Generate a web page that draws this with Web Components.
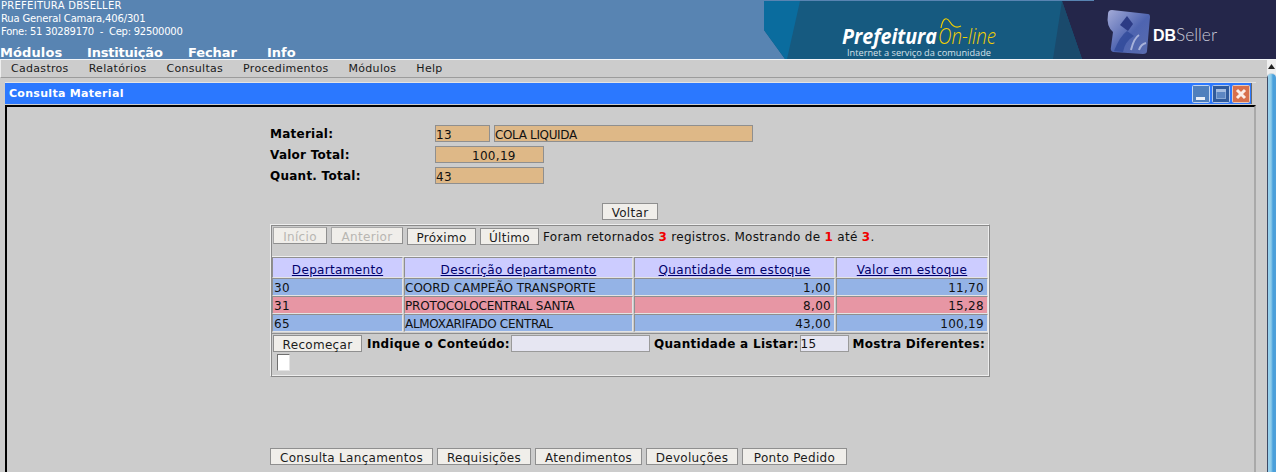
<!DOCTYPE html>
<html lang="pt">
<head>
<meta charset="utf-8">
<title>Consulta Material</title>
<style>
    html, body {
        margin: 0;
        height: 100%;
        overflow: hidden;
        background: #cccccc;
        font-family: "DejaVu Sans", sans-serif;
    }
    #page {
        display: flex;
        flex-direction: column;
        height: 472px;
        overflow: hidden;
    }
    #main {
        display: flex;
        flex: 1;
        min-height: 0;
    }
    #left {
        flex: 1;
        min-width: 0;
        display: flex;
        flex-direction: column;
    }
</style>
</head>
<body>
<div id="page">
    <db-header></db-header>
    <div id="main">
        <div id="left">
            <db-menubar></db-menubar>
            <db-window title="Consulta Material">
                <db-form></db-form>
                <db-grid></db-grid>
                <db-actions></db-actions>
            </db-window>
        </div>
        <db-scrollbar></db-scrollbar>
    </div>
</div>

<script>
const buttonStyles = `
    .btn {
        box-sizing: border-box;
        display: inline-flex;
        align-items: center;
        justify-content: center;
        height: 17px;
        padding: 2px 9px 0;
        border: 1px solid #8f8f8f;
        background: #f0eeea;
        color: #1c1c1c;
        font: 12px "DejaVu Sans", sans-serif;
        letter-spacing: .3px;
        white-space: nowrap;
    }
    .btn.off {
        color: #b8b6b2;
        border-color: #a8a8a8 #8f8f8f #8f8f8f #a8a8a8;
    }
`;

class DbHeader extends HTMLElement {
    constructor() {
        super();
        this.attachShadow({mode: "open"});
        this.shadowRoot.innerHTML = `
<style>
    :host {
        display: flex;
        justify-content: space-between;
        height: 59px;
        flex: none;
        background: #5884b2;
        border-bottom: 1px solid #f2f5f8;
        color: #fff;
    }
    .info {
        font-size: 10px;
        line-height: 13px;
        padding-left: 1px;
        margin-top: -1px;
        white-space: pre;
    }
    .info div:nth-child(1) { letter-spacing: .26px; }
    .info div:nth-child(2) { letter-spacing: -.16px; }
    .info div:nth-child(3) { letter-spacing: -.26px; }
    nav {
        display: flex;
        font-size: 13px;
        font-weight: bold;
        line-height: 15px;
        margin-top: 7px;
    }
    nav span { white-space: nowrap; }
    nav span:nth-child(1) { width: 87px; letter-spacing: .1px; }
    nav span:nth-child(2) { width: 101px; letter-spacing: -.2px; }
    nav span:nth-child(3) { width: 79px; letter-spacing: -.1px; }
    svg {
        display: block;
        flex: none;
    }
</style>
<div>
    <div class="info"><div>PREFEITURA DBSELLER</div><div>Rua General Camara,406/301</div><div>Fone: 51 30289170  -  Cep: 92500000</div></div>
    <nav><span>Módulos</span><span>Instituição</span><span>Fechar</span><span>Info</span></nav>
</div>
<svg width="512" height="59" viewBox="764 0 512 59">
    <defs>
        <linearGradient id="cube" x1="0" y1="0" x2="1" y2="1">
            <stop offset="0" stop-color="#a4abd8"/>
            <stop offset=".55" stop-color="#4e64b0"/>
            <stop offset="1" stop-color="#5a6cae"/>
        </linearGradient>
    </defs>
    <polygon points="764,1 1276,1 1276,59 785,59 764,30" fill="#165a80"/>
    <polygon points="764,1 800,1 787,59 785,59 764,30" fill="#0a6c9e"/>
    <polygon points="1062,1 1094,1 1094,0 1276,0 1276,59 1082,59" fill="#24264a"/>
    <polygon points="1062,1 1082,59 1053,59" fill="#1a4a6c"/>
    <text x="842" y="44" font-family="'Open Sans', sans-serif" font-size="21" font-weight="700" font-style="italic" fill="#fff" textLength="95" lengthAdjust="spacingAndGlyphs">Prefeitura</text>
    <text x="938" y="44" font-family="'Open Sans', sans-serif" font-size="22" font-weight="300" font-style="italic" fill="#f3d000" textLength="58" lengthAdjust="spacingAndGlyphs">On-line</text>
    <path d="M941 28 C943 17 947 17 950 22 C953 27 957 28 961 26" fill="none" stroke="#f3d000" stroke-width="1.2"/>
    <text x="847" y="56" font-family="'Open Sans', sans-serif" font-size="9.5" fill="#d5e0e8" textLength="144" lengthAdjust="spacingAndGlyphs">Internet a serviço da comunidade</text>
    <path d="M1108 14 Q1108 10 1112 10 L1148 14 Q1150 14 1150 17 L1147 51 Q1147 54 1143 54 L1113 52 Q1110 51 1111 47 L1113 32 Q1106 26 1108 14 Z" fill="url(#cube)"/>
    <polygon points="1120,25 1127,16 1133,24 1128,31" fill="#2c3b85"/>
    <path d="M1114 51 Q1120 36 1127 31 L1134 36 Q1125 41 1123 52 Z" fill="#2f4898" opacity=".8"/>
    <path d="M1131 50 Q1134 38 1139 35 M1139 50 Q1141 44 1146 43" fill="none" stroke="#c4cbe8" stroke-width="2" opacity=".75"/>
    <text x="1153" y="41" font-family="'Liberation Sans', sans-serif" font-size="16" font-weight="bold" fill="#fff">DB</text>
    <text x="1176" y="41" font-family="Lato, sans-serif" font-size="17" font-weight="300" fill="#c9cbd8" textLength="41" lengthAdjust="spacingAndGlyphs">Seller</text>
</svg>`;
    }
}

class DbMenubar extends HTMLElement {
    constructor() {
        super();
        this.attachShadow({mode: "open"});
        const items = ["Cadastros", "Relatórios", "Consultas", "Procedimentos", "Módulos", "Help"];
        this.shadowRoot.innerHTML = `
<style>
    :host {
        display: flex;
        flex: none;
        box-sizing: border-box;
        height: 18px;
        align-items: center;
        gap: 20px;
        padding-left: 10px;
        background: #cccccc;
        border-left: 1px solid #eeeeee;
        border-bottom: 1px solid #9c9c9c;
        color: #1a1a1a;
        font-size: 11px;
        letter-spacing: .3px;
    }
</style>
${items.map(i => `<span>${i}</span>`).join("")}`;
    }
}

class DbWindow extends HTMLElement {
    constructor() {
        super();
        this.attachShadow({mode: "open"});
        this.shadowRoot.innerHTML = `
<style>
    :host {
        display: flex;
        flex-direction: column;
        flex: 1;
        min-height: 0;
        width: 1251px;
        margin: 4px 0 0 5px;
        border-top: 1px solid #e4e4e4;
    }
    .bar {
        flex: none;
        box-sizing: border-box;
        display: flex;
        align-items: center;
        justify-content: space-between;
        width: 1247px;
        height: 21px;
        padding: 0 1px 0 4px;
        background: #2b78ff;
        border-right: 1px solid #6b6b6b;
        color: #fff;
        font-size: 11px;
        font-weight: bold;
        letter-spacing: .3px;
    }
    .tools { display: flex; gap: 2px; }
    .tools svg { display: block; }
    .body {
        flex: 1;
        min-height: 0;
        display: flex;
        flex-direction: column;
        border-top: 2px solid #000;
        border-left: 2px solid #000;
        border-right: 2px solid #a9a9a9;
        margin-top: 1px;
        padding: 18px 0 0 263px;
    }
</style>
<div class="bar">
    <span>${this.getAttribute("title")}</span>
    <div class="tools">
        <svg width="18" height="18"><rect x=".5" y=".5" width="17" height="17" rx="1" fill="#4f7fbd" stroke="#c4d6f0"/><rect x="4" y="12" width="9" height="3" fill="#e8eef8"/></svg>
        <svg width="18" height="18"><rect x=".5" y=".5" width="17" height="17" rx="1" fill="#2f5a9c" stroke="#b4c8e8"/><rect x="4.5" y="4.5" width="9" height="9" fill="#5c86c2" stroke="#86a6d4"/><rect x="4" y="4" width="10" height="3" fill="#a4bce0"/></svg>
        <svg width="18" height="18"><rect x=".5" y=".5" width="17" height="17" rx="1" fill="#d8704c" stroke="#e8c8b8"/><path d="M5 5 L13 13 M13 5 L5 13" stroke="#fbeee8" stroke-width="3"/></svg>
    </div>
</div>
<div class="body"><slot></slot></div>`;
    }
}

class DbForm extends HTMLElement {
    constructor() {
        super();
        this.attachShadow({mode: "open"});
        this.shadowRoot.innerHTML = `
<style>
    :host {
        display: grid;
        grid-template-columns: 165px 1fr;
        row-gap: 4px;
        width: 720px;
        color: #000;
        font-size: 12px;
    }
    b { height: 17px; line-height: 19px; letter-spacing: .25px; }
    .vals { display: flex; gap: 4px; }
    .f {
        box-sizing: border-box;
        height: 17px;
        border: 1px solid #8f8f8f;
        background: #deb887;
        line-height: 18px;
        color: #111;
        overflow: hidden;
        white-space: nowrap;
    }
    .voltar {
        grid-column: 1 / 3;
        display: flex;
        justify-content: center;
        margin: 15px 0 4px;
    }
    ${buttonStyles}
    .voltar .btn { width: 56px; padding: 2px 0 0; }
</style>
<b>Material:</b>
<div class="vals">
    <div class="f" style="width:55px;letter-spacing:.3px">13</div>
    <div class="f" style="width:259px;letter-spacing:-.35px">COLA LIQUIDA</div>
</div>
<b>Valor Total:</b>
<div class="vals"><div class="f" style="width:109px;padding-left:36px;letter-spacing:.3px">100,19</div></div>
<b>Quant. Total:</b>
<div class="vals"><div class="f" style="width:109px;letter-spacing:.3px">43</div></div>
<div class="voltar"><span class="btn">Voltar</span></div>`;
    }
}

class DbGrid extends HTMLElement {
    constructor() {
        super();
        this.attachShadow({mode: "open"});
        const rows = [
            ["30", "COORD CAMPEÃO TRANSPORTE", "1,00", "11,70", "blue", "0"],
            ["31", "PROTOCOLOCENTRAL SANTA", "8,00", "15,28", "red", "-.2px"],
            ["65", "ALMOXARIFADO CENTRAL", "43,00", "100,19", "blue", "-.3px"]
        ];
        const cells = rows.map(r => `
            <div class="c ${r[4]}" style="letter-spacing:.3px">${r[0]}</div>
            <div class="c ${r[4]}" style="padding-left:0;letter-spacing:${r[5]}">${r[1]}</div>
            <div class="c ${r[4]} num">${r[2]}</div>
            <div class="c ${r[4]} num">${r[3]}</div>`).join("");
        this.shadowRoot.innerHTML = `
<style>
    :host {
        display: block;
        box-sizing: border-box;
        width: 720px;
        height: 153px;
        border: 1px solid;
        border-color: #eeeeee #8a8a8a #8a8a8a #eeeeee;
        box-shadow: inset 1px 1px 0 #8a8a8a, inset -1px -1px 0 #eeeeee;
        padding: 1px;
        font-size: 12px;
        color: #111;
    }
    .nav {
        display: flex;
        align-items: flex-start;
        gap: 4px;
        height: 31px;
        padding: 2px 0 0 1px;
        border-bottom: 1px solid #eeeeee;
        box-sizing: border-box;
        line-height: 19px;
        letter-spacing: .3px;
    }
    .nav .off { margin-top: -1px; }
    .status { white-space: nowrap; }
    .status b { color: #f00000; }
    ${buttonStyles}
    .table {
        display: grid;
        grid-template-columns: 131px 229px 201px 152px;
        column-gap: 1px;
        grid-template-rows: 21px 18px 18px 18px;
    }
    .c {
        box-sizing: border-box;
        border: 1px solid;
        border-color: #8f8f8f #e4e4e4 #e4e4e4 #8f8f8f;
        padding-left: 1px;
        line-height: 18px;
        white-space: nowrap;
        overflow: hidden;
    }
    .h {
        background: #ccccff;
        color: #00006a;
        text-align: center;
        text-decoration: underline;
        line-height: 24px;
        padding: 0;
        letter-spacing: .33px;
    }
    .blue { background: #94b3e6; }
    .red { background: #e796a4; }
    .num { text-align: right; padding: 0 3px 0 0; letter-spacing: .3px; }
    .search {
        display: flex;
        align-items: center;
        flex-wrap: wrap;
        margin-top: 1px;
        padding: 1px 0 0 1px;
        border-top: 1px solid #8f8f8f;
    }
    .search b { font-size: 12px; color: #000; white-space: nowrap; letter-spacing: .3px; }
    .i {
        box-sizing: border-box;
        height: 17px;
        border: 1px solid #9a9a9a;
        background: #e6e6f2;
        line-height: 17px;
        letter-spacing: .3px;
    }
    .check {
        width: 13px;
        height: 17px;
        margin: 2px 0 0 4px;
        background: #fff;
        border: 1px solid;
        border-color: #707070 #e4e4e4 #e4e4e4 #707070;
        box-sizing: border-box;
        flex: none;
    }
    .break { flex-basis: 100%; height: 0; }
</style>
<div class="nav">
    <span class="btn off" style="width:54px">Início</span>
    <span class="btn off" style="width:72px">Anterior</span>
    <span class="btn" style="width:69px">Próximo</span>
    <span class="btn" style="width:59px">Último</span>
    <span class="status">Foram retornados <b>3</b> registros. Mostrando de <b>1</b> até <b>3</b>.</span>
</div>
<div class="table">
    <div class="c h">Departamento</div>
    <div class="c h">Descrição departamento</div>
    <div class="c h">Quantidade em estoque</div>
    <div class="c h">Valor em estoque</div>
    ${cells}
</div>
<div class="search">
    <span class="btn" style="width:89px">Recomeçar</span>
    <b style="margin-left:5px">Indique o Conteúdo:</b>
    <div class="i" style="width:139px;margin-left:1px"></div>
    <b style="margin-left:4px">Quantidade a Listar:</b>
    <div class="i" style="width:49px;margin-left:1px">15</div>
    <b style="margin-left:4px">Mostra Diferentes:</b>
    <div class="break"></div>
    <div class="check"></div>
</div>`;
    }
}

class DbActions extends HTMLElement {
    constructor() {
        super();
        this.attachShadow({mode: "open"});
        const buttons = [["Consulta Lançamentos", 163], ["Requisições", 94], ["Atendimentos", 107], ["Devoluções", 92], ["Ponto Pedido", 105]];
        this.shadowRoot.innerHTML = `
<style>
    :host {
        display: flex;
        gap: 4px;
        margin-top: 71px;
    }
    ${buttonStyles}
    .btn { padding-left: 0; padding-right: 0; }
</style>
${buttons.map(b => `<span class="btn" style="width:${b[1]}px">${b[0]}</span>`).join("")}`;
    }
}

class DbScrollbar extends HTMLElement {
    constructor() {
        super();
        this.attachShadow({mode: "open"});
        this.shadowRoot.innerHTML = `
<style>
    :host {
        display: flex;
        flex-direction: column;
        flex: none;
        width: 9px;
        background: #eeeeee;
    }
    .arrow {
        height: 13px;
        flex: none;
        display: flex;
        align-items: center;
        justify-content: center;
    }
    .thumb {
        flex: 1;
        border-radius: 5px 5px 0 0;
        border-top: 1px solid #c8d4dc;
        background: linear-gradient(to right, #3c4a66 0, #3c4a66 1px, #9ad2ee 1px, #8ccbea 4px, #49a0dc 6px, #4f9fd8 9px);
    }
</style>
<div class="arrow"><svg width="7" height="5"><polygon points="3.5,0 7,5 0,5" fill="#222"/></svg></div>
<div class="thumb"></div>`;
    }
}

customElements.define("db-header", DbHeader);
customElements.define("db-menubar", DbMenubar);
customElements.define("db-window", DbWindow);
customElements.define("db-form", DbForm);
customElements.define("db-grid", DbGrid);
customElements.define("db-actions", DbActions);
customElements.define("db-scrollbar", DbScrollbar);
</script>
</body>
</html>
